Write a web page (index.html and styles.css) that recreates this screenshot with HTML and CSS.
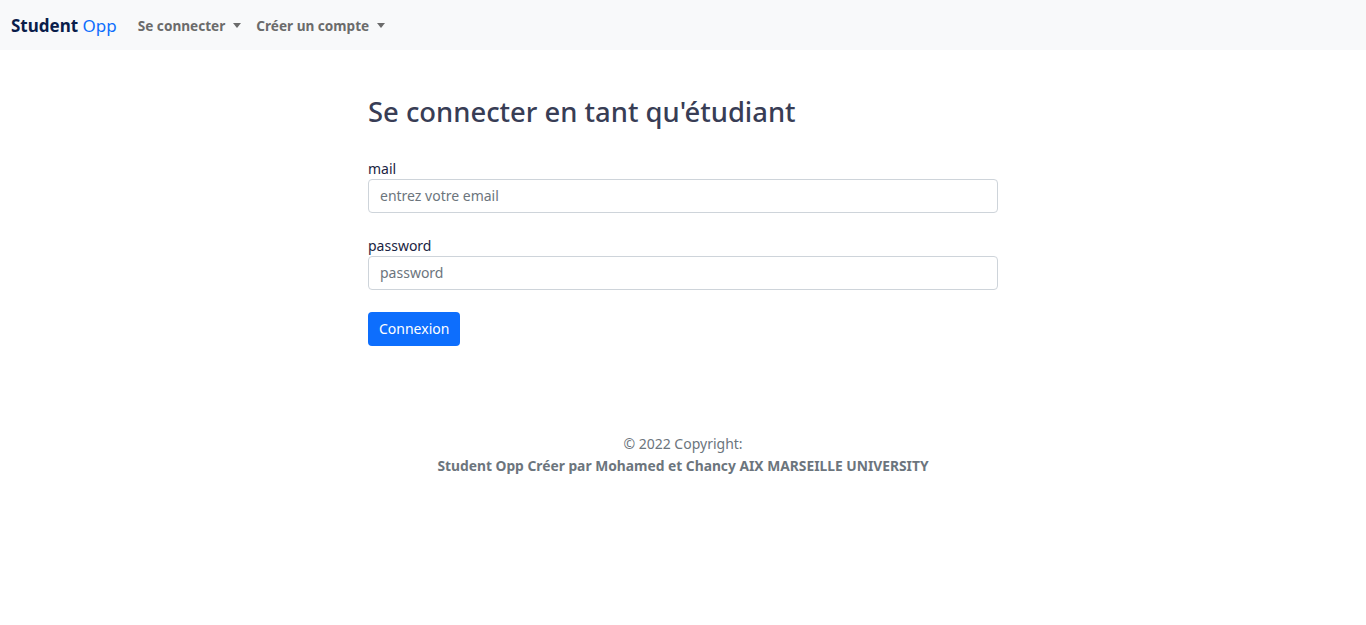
FILE: index.html
```html
<!DOCTYPE html>
<html lang="fr">
<head>
<meta charset="utf-8">
<title>Student Opp</title>
<link rel="stylesheet" href="styles.css">
</head>
<body>
<nav class="navbar">
  <a class="brand" href="#"><span class="brand-main">Student</span> <span class="brand-accent">Opp</span></a>
  <ul class="nav">
    <li><a class="nav-link" href="#">Se connecter<span class="caret"></span></a></li>
    <li><a class="nav-link" href="#">Créer un compte<span class="caret"></span></a></li>
  </ul>
</nav>
<main class="container">
  <h2 class="title">Se connecter en tant qu'étudiant</h2>
  <form class="form">
    <div class="field">
      <label class="label" for="mail">mail</label>
      <input class="input" id="mail" type="email" placeholder="entrez votre email">
    </div>
    <div class="field">
      <label class="label" for="pw">password</label>
      <input class="input" id="pw" type="password" placeholder="password">
    </div>
    <button class="btn" type="button">Connexion</button>
  </form>
</main>
<footer class="footer">
  <div class="copy">© 2022 Copyright:</div>
  <div class="credit">Student Opp Créer par Mohamed et Chancy AIX MARSEILLE UNIVERSITY</div>
</footer>
</body>
</html>
```

FILE: styles.css
```css
* { box-sizing: border-box; }
body {
  margin: 0;
  font-family: "Noto Sans", "Open Sans", sans-serif;
  font-size: 14px;
  color: #212529;
  background: #fff;
}
.navbar {
  height: 50px;
  background: #f8f9fa;
  display: flex;
  align-items: center;
  padding: 0 11px;
}
.brand {
  text-decoration: none;
  font-size: 17px;
  margin-right: 21px;
}
.brand-main { font-weight: 700; color: #0a1d4a; }
.brand-accent { color: #0d6efd; }
.nav {
  list-style: none;
  margin: 0;
  padding: 0;
  display: flex;
  gap: 15px;
}
.nav-link {
  text-decoration: none;
  color: #6b6b6b;
  font-weight: 700;
  font-size: 13.6px;
  display: flex;
  align-items: center;
}
.caret {
  display: inline-block;
  margin-left: 8px;
  border-top: 5px solid #6b6b6b;
  border-left: 4.5px solid transparent;
  border-right: 4.5px solid transparent;
}
.container {
  width: 630px;
  margin: 0 auto;
  padding-top: 46px;
}
.title {
  margin: 0 0 29px;
  font-size: 27.4px;
  font-weight: 500;
  color: #383d55;
  line-height: 1.2;
}
.field {
  margin-bottom: 22px;
  display: flex;
  flex-direction: column;
}
.label {
  color: #1a2442;
  margin-bottom: 0;
  line-height: 21px;
}
.input {
  height: 34px;
  border: 1px solid #ced4da;
  border-radius: 4px;
  padding: 0 11px;
  font: inherit;
  font-size: 14px;
  color: #212529;
}
.input::placeholder { color: #6c757d; }
.btn {
  height: 34px;
  background: #0d6efd;
  color: #fff;
  border: none;
  border-radius: 4px;
  padding: 0 11px;
  font: inherit;
  font-size: 14px;
}
.footer {
  margin-top: 87px;
  text-align: center;
  color: #6c757d;
  line-height: 22px;
}
.credit { font-weight: 700; font-size: 13.8px; }
```
